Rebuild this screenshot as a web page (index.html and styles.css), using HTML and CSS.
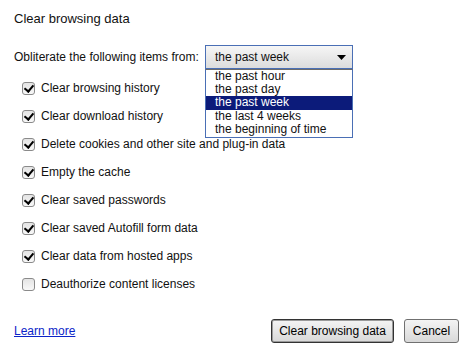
FILE: index.html
```html
<!DOCTYPE html>
<html>
<head>
<meta charset="utf-8">
<link rel="stylesheet" href="styles.css">
</head>
<body>
<div class="dialog">
  <div class="title">Clear browsing data</div>
  <div class="range-row">
    <span class="range-label">Obliterate the following items from:</span>
    <div class="select">
      <div class="select-head">
        <span>the past week</span>
        <svg class="arrow" width="9" height="5" viewBox="0 0 9 5"><path d="M0 0H9L4.5 5Z" fill="#000"/></svg>
      </div>
      <ul class="select-list">
        <li>the past hour</li>
        <li>the past day</li>
        <li class="sel">the past week</li>
        <li>the last 4 weeks</li>
        <li>the beginning of time</li>
      </ul>
    </div>
  </div>
  <ul class="checks">
    <li><span class="cb on"></span>Clear browsing history</li>
    <li><span class="cb on"></span>Clear download history</li>
    <li><span class="cb on"></span>Delete cookies and other site and plug-in data</li>
    <li><span class="cb on"></span>Empty the cache</li>
    <li><span class="cb on"></span>Clear saved passwords</li>
    <li><span class="cb on"></span>Clear saved Autofill form data</li>
    <li><span class="cb on"></span>Clear data from hosted apps</li>
    <li><span class="cb"></span>Deauthorize content licenses</li>
  </ul>
  <div class="footer">
    <a class="learn" href="#">Learn more</a>
    <div class="buttons">
      <button class="btn default">Clear browsing data</button>
      <button class="btn">Cancel</button>
    </div>
  </div>
</div>
</body>
</html>
```
FILE: styles.css
```css
html, body {
  margin: 0;
  padding: 0;
  background: #fff;
}
body {
  font-family: "Liberation Sans", Arial, sans-serif;
  font-size: 12px;
  color: #111;
}
.dialog {
  width: 474px;
  height: 355px;
  box-sizing: border-box;
  padding: 10px 14px 0 14px;
  display: flex;
  flex-direction: column;
}
.title {
  font-size: 13px;
  line-height: 18px;
  height: 18px;
}
.range-row {
  margin-top: 17px;
  display: flex;
  align-items: center;
  height: 24px;
}
.range-label {
  width: 191px;
}
.select {
  position: relative;
  width: 148px;
  height: 24px;
}
.select-head {
  box-sizing: border-box;
  height: 24px;
  border: 1px solid #4a6fb5;
  background: linear-gradient(#f6f6f6, #dcdcdc);
  display: flex;
  align-items: center;
  justify-content: space-between;
  padding: 0 6px 0 9px;
}
.arrow {
  display: block;
}
.select-list {
  position: absolute;
  left: 0;
  top: 24px;
  width: 148px;
  box-sizing: border-box;
  margin: 0;
  padding: 0 0 1px 0;
  list-style: none;
  border: 1px solid #4a6fb5;
  border-top: 1px solid #6b6b6b;
  background: #fff;
  z-index: 2;
}
.select-list li {
  height: 13.2px;
  line-height: 13px;
  padding-left: 9px;
}
.select-list li.sel {
  background: #0c1b7a;
  color: #fff;
}
.checks {
  list-style: none;
  margin: 5px 0 0 0;
  padding: 0 0 0 8px;
}
.checks li {
  height: 28px;
  display: flex;
  align-items: center;
}
.cb {
  width: 13px;
  height: 13px;
  box-sizing: border-box;
  border: 1px solid #8a8a8a;
  border-radius: 3px;
  background: linear-gradient(#e4e4e4, #f8f8f8);
  margin-right: 6px;
  position: relative;
  flex: none;
}
.cb.on::after {
  content: "";
  position: absolute;
  left: 3px;
  top: 0px;
  width: 4px;
  height: 7px;
  border: solid #000;
  border-width: 0 2.5px 2.5px 0;
  transform: rotate(40deg);
}
.footer {
  margin-top: auto;
  margin-bottom: 12px;
  display: flex;
  align-items: center;
  justify-content: space-between;
}
.learn {
  color: #0b24c8;
  text-decoration: underline;
  font-size: 12px;
}
.buttons {
  display: flex;
  gap: 10px;
  margin-right: 1px;
}
.btn {
  font-family: "Liberation Sans", Arial, sans-serif;
  font-size: 12px;
  height: 24px;
  padding: 0;
  white-space: nowrap;
  border: 1px solid #707070;
  border-radius: 3px;
  background: linear-gradient(#f4f4f4, #d8d8d8);
  color: #000;
}
.btn.default {
  width: 123px;
  border-color: #333;
  box-shadow: inset 0 0 0 1px #9a9a9a;
}
.btn:not(.default) {
  width: 55px;
}
```
